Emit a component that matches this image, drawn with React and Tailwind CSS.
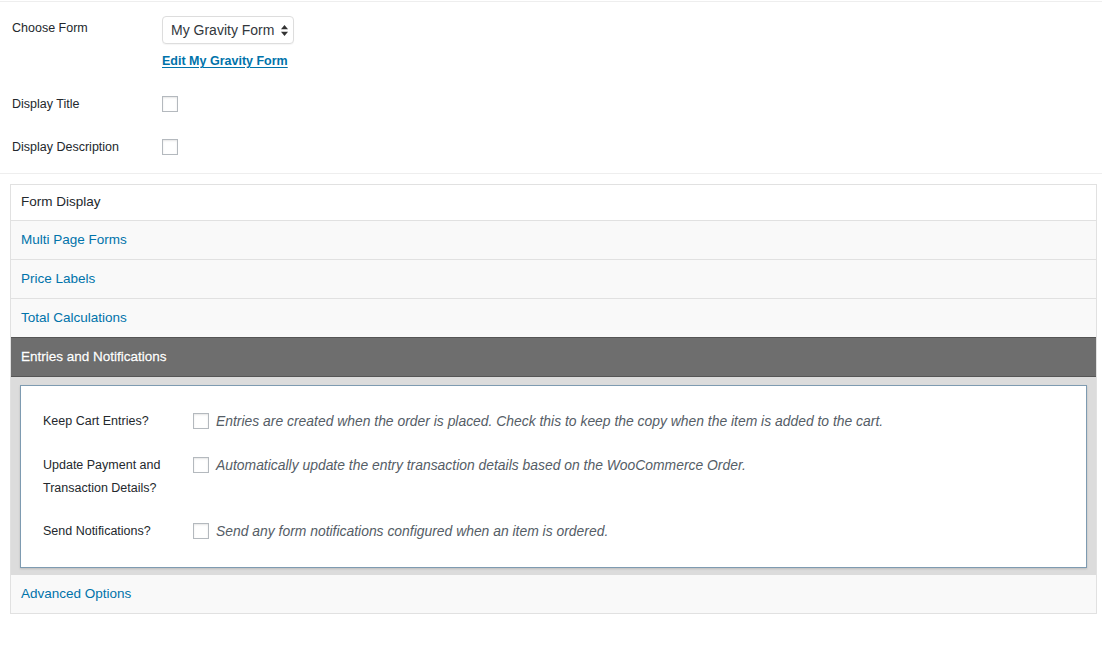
import React from 'react';

function Checkbox({ className = '' }) {
    return (
        <span className={`block w-[16px] h-[16px] shrink-0 border border-[#b4b9be] bg-white shadow-[inset_0_1px_2px_rgba(0,0,0,0.1)] ${className}`} />
    );
}

function AccordionRow({ title, first = false }) {
    return (
        <div className={`${first ? 'h-[35px] bg-white text-[#23282d]' : 'h-[39px] bg-[#f9f9f9] text-[#0073aa] border-t border-[#e1e1e1]'} flex items-center px-[10px] text-[13.5px]`}>
            {title}
        </div>
    );
}

const cartOptions = [
    {
        label: ['Keep Cart Entries?'],
        help: 'Entries are created when the order is placed. Check this to keep the copy when the item is added to the cart.',
    },
    {
        label: ['Update Payment and', 'Transaction Details?'],
        help: 'Automatically update the entry transaction details based on the WooCommerce Order.',
    },
    {
        label: ['Send Notifications?'],
        help: 'Send any form notifications configured when an item is ordered.',
    },
];

export default function App() {
    return (
        <div className="w-[1102px] h-[648px] bg-white font-['Liberation_Sans',Arial,sans-serif] text-[13px] text-[#23282d] overflow-hidden">
            <div className="h-[1px]" />
            <div className="border-t border-[#eeeeee] pl-[12px] h-[172px]">
                {/* 폼 선택 */}
                <div className="flex items-start">
                    <div className="w-[150px] mt-[16px] leading-[20px] text-[12.5px]">Choose Form</div>
                    <div className="mt-[14px]">
                        <div className="h-[28px] w-[132px] flex items-center justify-between pl-[8px] pr-[5px] border border-[#dddddd] rounded-[4px] bg-white shadow-[0_1px_1px_rgba(0,0,0,0.04)] text-[14px] text-[#32373c]">
                            <span>My Gravity Form</span>
                            <svg width="7" height="11" viewBox="0 0 7 11">
                                <path d="M3.5 0 L7 4.3 H0 Z" fill="#333" />
                                <path d="M3.5 11 L7 6.7 H0 Z" fill="#333" />
                            </svg>
                        </div>
                        <a className="block mt-[9px] leading-[16px] text-[12.5px] font-bold text-[#0073aa] underline underline-offset-2">Edit My Gravity Form</a>
                    </div>
                </div>
                <div className="flex items-center mt-[25px] h-[20px]">
                    <div className="w-[150px] text-[12.5px]">Display Title</div>
                    <Checkbox />
                </div>
                <div className="flex items-center mt-[23px] h-[20px]">
                    <div className="w-[150px] text-[12.5px]">Display Description</div>
                    <Checkbox />
                </div>
            </div>
            <div className="border-t border-[#eeeeee]" />

            {/* 아코디언 */}
            <div className="ml-[10px] mt-[10px] w-[1087px] border border-[#e1e1e1]">
                <AccordionRow title="Form Display" first />
                <AccordionRow title="Multi Page Forms" />
                <AccordionRow title="Price Labels" />
                <AccordionRow title="Total Calculations" />
                <div className="h-[40px] flex items-center px-[10px] bg-[#6e6e6e] border-y border-[#555555] text-white text-[13.5px] [text-shadow:0_0_1px_rgba(0,0,0,0.8)] [-webkit-text-stroke:0.35px_white]">
                    Entries and Notifications
                </div>
                <div className="bg-[#dcdcdc] px-[9px] pt-[8px] pb-[7px]">
                    <div className="bg-white border border-[#7e9bb1] shadow-[0_1px_2px_rgba(0,0,0,0.15)] h-[183px] pl-[22px] pt-[24px]">
                        {cartOptions.map((opt, i) => (
                            <div key={i} className={`flex items-start ${i === 0 ? '' : i === 1 ? 'mt-[21px]' : 'mt-[20px]'}`}>
                                <div className="w-[150px] leading-[23px] text-[12.5px]">
                                    {opt.label.map((l) => (
                                        <div key={l}>{l}</div>
                                    ))}
                                </div>
                                <Checkbox className="mt-[3px]" />
                                <div className="ml-[7px] leading-[23px] italic text-[13.9px] text-[#555d66]">{opt.help}</div>
                            </div>
                        ))}
                    </div>
                </div>
                <div className="h-[38px] flex items-center px-[10px] bg-[#f9f9f9] text-[#0073aa] text-[13.5px]">Advanced Options</div>
            </div>
        </div>
    );
}
